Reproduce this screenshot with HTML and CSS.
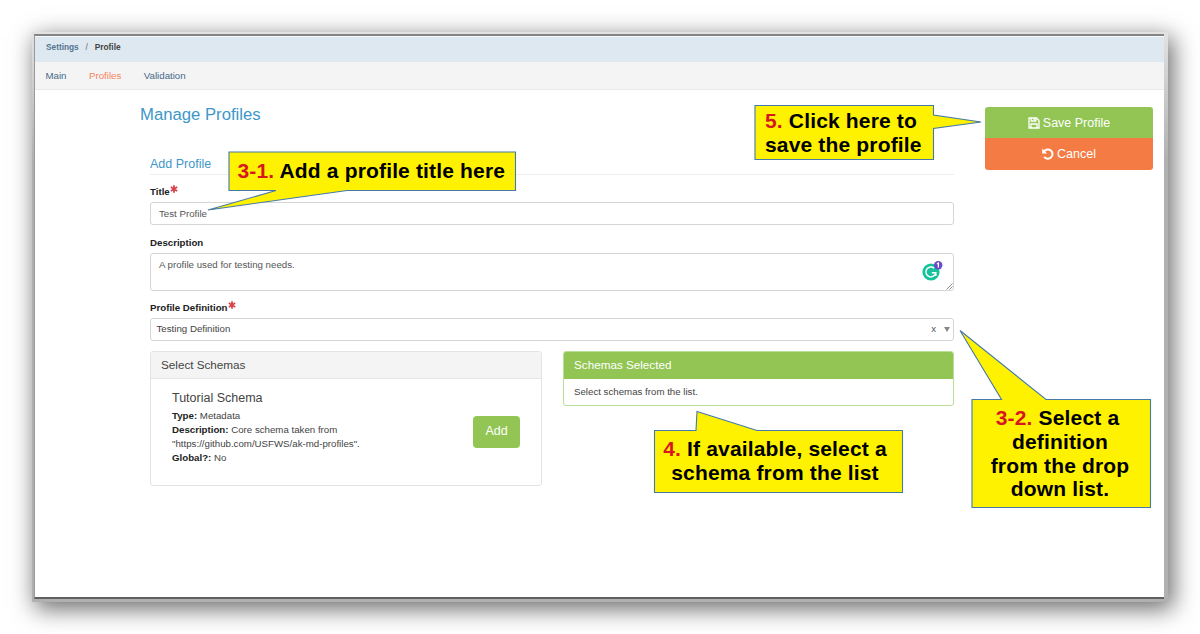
FILE: index.html
```html
<!DOCTYPE html>
<html lang="en">
<head>
<meta charset="utf-8">
<title>Manage Profiles</title>
<link rel="stylesheet" href="styles.css">
</head>
<body>
<div class="window">
  <div class="app">
    <nav class="crumbs"><a>Settings</a><i>/</i><b>Profile</b></nav>
    <nav class="tabs"><a>Main</a><a class="active">Profiles</a><a>Validation</a></nav>
    <div class="body">
      <main class="content">
        <h1>Manage Profiles</h1>
        <form class="form">
          <h2>Add Profile</h2>
          <label class="label">Title<svg class="req" viewBox="0 0 8 8"><path d="M4 .3v7.4M.8 2.1l6.4 3.8M7.200 2.100L.8 5.900"/></svg></label>
          <div class="field title">Test Profile</div>
          <label class="label">Description</label>
          <div class="field area">A profile used for testing needs.
            <svg class="grammar" viewBox="0 0 22 20"><circle cx="9" cy="11" r="8.6" fill="#15c39a"/><path d="M12.2 7.200A5 5 0 1 0 13.800 11.700H9.800M13.800 11.700v3.400" fill="none" stroke="#fff" stroke-width="1.5"/><circle cx="16.2" cy="4.2" r="4.2" fill="#6b4cc8"/><path d="M14.900 3l1.500-1v4.500" fill="none" stroke="#fff" stroke-width="1.2"/></svg>
            <svg class="grip" viewBox="0 0 7 7"><path d="M.5 6.5l6-6M3.5 6.5l3-3"/></svg>
          </div>
          <label class="label">Profile Definition<svg class="req" viewBox="0 0 8 8"><path d="M4 .3v7.4M.8 2.1l6.4 3.8M7.200 2.100L.8 5.900"/></svg></label>
          <div class="field select"><span>Testing Definition</span><span class="clear">x</span><svg class="arrow" viewBox="0 0 6 5"><path d="M0 0h6L3 5z"/></svg></div>
        </form>
        <div class="panels">
          <section class="panel">
            <h3>Select Schemas</h3>
            <div class="schema">
              <div class="info">
                <h4>Tutorial Schema</h4>
                <p><b>Type:</b> Metadata</p>
                <p><b>Description:</b> Core schema taken from</p>
                <p>"https://github.com/USFWS/ak-md-profiles".</p>
                <p><b>Global?:</b> No</p>
              </div>
              <div class="add">Add</div>
            </div>
          </section>
          <section class="panel green">
            <h3>Schemas Selected</h3>
            <p class="empty">Select schemas from the list.</p>
          </section>
        </div>
      </main>
      <aside class="actions">
        <div class="btn save"><svg viewBox="0 0 12 12"><path d="M1 1h7.5L11 3.5V11H1zM3.2 1v3h4.6V1M3 11V7h6v4"/><path d="M6.2 1.2v2"/></svg>Save Profile</div>
        <div class="btn cancel"><svg viewBox="0 0 12 12"><path d="M2 3.6A4.6 4.6 0 1 1 2.2 8.8" stroke-width="2"/><path d="M.2.6v4.8H5z" fill="#fff" stroke="none"/></svg>Cancel</div>
      </aside>
    </div>
  </div>
</div>
<svg class="callouts" viewBox="0 0 1200 634">
  <path d="M229 152H515.5V190.5H347L208 210L276 190.5H229z"/>
  <path d="M755 105.500H933.500V115L981 122L933.500 128.500V159.500H755z"/>
  <path d="M654.500 430.500H696L697 411.500L757 430.500H902.500V492.500H654.500z"/>
  <path d="M972 399.500H1001.500L960 330.500L1046 399.500H1150.500V507.500H972z"/>
</svg>
<div class="note n1"><span><em>3-1.</em> Add a profile title here</span></div>
<div class="note n5"><span><em>5.</em> Click here to</span><span>save the profile</span></div>
<div class="note n4"><span><em>4.</em> If available, select a</span><span>schema from the list</span></div>
<div class="note n2"><span class="first"><em>3-2.</em> Select a</span><span>definition</span><span>from the drop</span><span>down list.</span></div>
</body>
</html>
```
FILE: styles.css
```css
* { box-sizing: border-box; }
body { margin: 0; width: 1200px; height: 634px; overflow: hidden; background: #fff; padding: 32px 0 0 32px; font: 9.7px/14px "Liberation Sans", Arial, sans-serif; color: #444; }
h1, h2, h3, h4, p { margin: 0; font-weight: normal; }
.window { width: 1136px; height: 570px; padding: 2px 4px 3px 2px; background: linear-gradient(#e2e2e2, #b0b0b0 130px); box-shadow: 4px 6px 22px 1px rgba(0,0,0,.58); }
.app { height: 565px; border-top: 2px solid #858585; border-bottom: 2px solid #606060; border-left: 1px solid #999; background: #fff; }
.crumbs { height: 26px; border-top: 1px solid #f5f8fb; padding: 0 0 5px 11px; background: #dde8f1; font-size: 8.3px; font-weight: bold; display: flex; align-items: center; color: #557590; }
.crumbs i { font-style: normal; font-weight: normal; width: 16px; text-align: center; color: #666; }
.crumbs b { color: #444; }
.tabs { height: 28px; background: #f4f4f4; border-bottom: 1px solid #e9e9e9; display: flex; gap: 22.500px; align-items: center; padding-left: 10.500px; color: #46698a; }
.tabs .active { color: #f4845c; }
.body { display: flex; justify-content: space-between; padding: 17px 11px 0 105px; }
.content { width: 814px; }
h1 { font-size: 16.7px; line-height: 18px; color: #3d97c9; margin-top: -1px; }
.form { margin-left: 10px; padding-top: 29px; }
h2 { color: #3d97c9; font-size: 12.500px; line-height: 23px; height: 22px; border-bottom: 1px solid #eee; margin-bottom: 10px; }
.label { display: block; height: 14px; line-height: 13.500px; font-weight: bold; color: #222; margin-bottom: 3px; }
.req { width: 8px; height: 8px; vertical-align: 2px; fill: none; stroke: #d9434b; stroke-width: 1.8; }
.field { position: relative; border: 1px solid #d5d5d5; border-radius: 3px; padding: 4px 8px; height: 23px; color: #555; }
.title { margin-bottom: 11px; }
.area { height: 38px; margin-bottom: 10px; }
.grammar { position: absolute; right: 9px; top: 7px; width: 22px; height: 20px; }
.grip { position: absolute; right: 0; bottom: 0; width: 7px; height: 7px; stroke: #888; }
.select { display: flex; align-items: center; padding: 0 3px 1px 5.500px; color: #444; }
.clear { margin-left: auto; margin-right: 8px; color: #555; }
.arrow { width: 6px; height: 5px; fill: #888; }
.panels { display: grid; grid-template-columns: 392px 391px; justify-content: space-between; align-items: start; margin: 9.500px 0 0 10px; }
.panel { border: 1px solid #e3e3e3; border-radius: 3px; overflow: hidden; }
.panel h3 { font-size: 11.700px; height: 27px; line-height: 25px; padding-left: 10px; background: #f4f4f4; border-bottom: 1px solid #e5e5e5; }
.green { border-color: #b9dd94; }
.green h3 { background: #92c553; border-color: #92c553; color: #fff; }
.empty { height: 26px; line-height: 26px; padding-left: 10px; }
.schema { height: 106px; padding: 10px 21px; display: flex; justify-content: space-between; }
.info h4 { font-size: 12.500px; line-height: 18px; margin-bottom: 2px; }
.info b { color: #222; }
.add { width: 47px; height: 32px; margin-top: 27px; border-radius: 4px; background: #92c553; color: #fff; font-size: 12.500px; line-height: 31px; text-align: center; }
.actions { width: 168px; height: 63px; border-radius: 3px; overflow: hidden; }
.btn { height: 31px; display: flex; gap: 3px; align-items: center; justify-content: center; font-size: 12.500px; color: #fff; background: #92c553; }
.btn svg { width: 12px; height: 12px; fill: none; stroke: #fff; stroke-width: 1.3; }
.cancel { height: 32px; background: #f47c44; }
.callouts { position: absolute; left: 0; top: 0; width: 1200px; height: 634px; fill: #fff200; stroke: #4579a8; stroke-width: 1.1; }
.note { position: absolute; font-size: 21px; line-height: 24px; font-weight: bold; color: #000; letter-spacing: .16px; white-space: nowrap; display: flex; flex-direction: column; }
.note em { font-style: normal; color: #d7171f; }
.n1 { left: 237.500px; top: 159px; }
.n5 { left: 765px; top: 109px; }
.n4 { left: 662px; top: 437px; width: 226px; align-items: center; }
.n2 { left: 972px; top: 406px; width: 176px; align-items: center; line-height: 23.800px; }
.n2 .first { margin-right: 5px; }
```
